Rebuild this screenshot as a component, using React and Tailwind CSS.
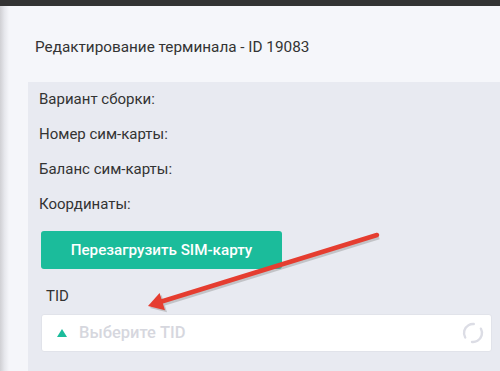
export default function App() {
  const rows = ['Вариант сборки:', 'Номер сим-карты:', 'Баланс сим-карты:', 'Координаты:'];

  return (
    <div className="relative w-[500px] h-[371px] overflow-hidden bg-[#f5f6fa] font-['Roboto',sans-serif] text-[#333]">
      <div className="h-[6px] bg-[#333333]" />
      <div className="flex h-[365px]">
        {/* left edge shadow */}
        <div className="w-[9px] shrink-0 bg-gradient-to-r from-[#d0d0d4] via-[#e6e7ec] to-[#f5f6fa]" />
        <div className="flex-1 pl-[19px]">
          <div className="h-[76px] flex items-center pl-[7px] pt-[6px] text-[15.3px]">
            Редактирование терминала - ID 19083
          </div>
          <div className="bg-[#e8eaf1] pl-[11px] pr-[8px] pb-6">
            {rows.map((r) => (
              <div key={r} className="h-[35px] flex items-center text-[15px]">{r}</div>
            ))}
            <button className="mt-[9px] ml-[2px] w-[241px] h-[38px] rounded-[3px] bg-[#1bbc9b] text-white text-[15.2px] font-medium">
              Перезагрузить SIM-карту
            </button>
            <div className="pl-[7px] mt-[19px] text-[15px] leading-[16px]">TID</div>
            <div className="mt-[10px] ml-[2px] h-[38px] bg-white rounded-[3px] border border-[#e1e3ea] flex items-center pl-[15px] pr-[6px]">
              <span className="w-0 h-0 border-l-[5px] border-r-[5px] border-b-[8px] border-l-transparent border-r-transparent border-b-[#1bbc9b]" />
              <span className="ml-[12px] text-[16.5px] font-medium text-[#d6d7de]">Выберите TID</span>
              <svg className="ml-auto" width="24" height="24" viewBox="0 0 24 24">
                <circle cx="12" cy="12" r="9" fill="none" stroke="#dcdde5" strokeWidth="2.4" strokeDasharray="19.5 8.8" strokeLinecap="round" transform="rotate(150 12 12)" />
              </svg>
            </div>
          </div>
        </div>
      </div>

      {/* red annotation arrow */}
      <svg className="absolute inset-0 pointer-events-none" width="500" height="371">
        <g transform="translate(2 2)" opacity="0.4">
          <line x1="377" y1="235" x2="160" y2="302" stroke="#8a8a8a" strokeWidth="4.5" />
          <polygon points="148,306 159.6,293 165,310.2" fill="#8a8a8a" />
        </g>
        <line x1="377" y1="235" x2="160" y2="302" stroke="#e53d30" strokeWidth="4.5" strokeLinecap="round" />
        <polygon points="148,306 159.6,293 165,310.2" fill="#e53d30" />
      </svg>
    </div>
  );
}
